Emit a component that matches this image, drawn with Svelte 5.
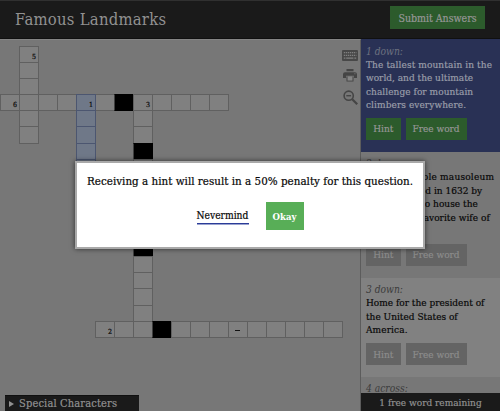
<script>
  const cells = new Map();
  const put = (row, col, extra = {}) => {
    const key = `${row}-${col}`;
    cells.set(key, { row, col, ...(cells.get(key) ?? {}), ...extra });
  };
  for (let row = 1; row <= 6; row++) put(row, 2);
  for (let col = 1; col <= 12; col++) put(4, col);
  for (let row = 4; row <= 18; row++) put(row, 8);
  for (let col = 6; col <= 18; col++) put(18, col);
  for (let row = 4; row <= 10; row++) put(row, 5, { active: true });
  put(1, 2, { label: '5' });
  put(4, 1, { label: '6' });
  put(4, 5, { label: '1' });
  put(4, 8, { label: '3' });
  put(18, 6, { label: '2' });
  put(4, 7, { block: true });
  put(7, 8, { block: true });
  put(13, 8, { block: true });
  put(18, 9, { block: true });
  put(18, 13, { dash: true });
  const board = [...cells.values()];

  // Each line carries its own tracking, in pixels.
  const clues = [
    { id: '1 down:', kind: 'current', lines: [['The tallest mountain in the', 0.1], ['world, and the ultimate', 0], ['challenge for mountain', 0.05], ['climbers everywhere.', 0.08]] },
    { id: '2 down:', kind: 'second', lines: [['This incredible mausoleum', 0.2], ['commissioned in 1632 by', 0.02], ['Shah Jahan to house the', 0.03], ['tomb of his favorite wife of', 0.03], ['the emperor.', 0]] },
    { id: '3 down:', kind: 'third', lines: [['Home for the president of', 0], ['the United States of', 0], ['America.', 0.1]] },
    { id: '4 across:', kind: 'fourth', lines: [] }
  ];
</script>

<div class="app">
  <header>
    <h1>Famous Landmarks</h1>
    <button class="submit">Submit Answers</button>
  </header>
  <div class="content">
    <main>
      <div class="board">
        {#each board as cell}
          <div
            class="cell"
            class:active={cell.active}
            class:block={cell.block}
            style="grid-area: {cell.row} / {cell.col}"
          >
            {#if cell.label}<span class="num">{cell.label}</span>{/if}
            {#if cell.dash}<span class="dash"></span>{/if}
          </div>
        {/each}
      </div>
      <div class="tools">
        <svg width="16" height="11" viewBox="0 0 16 11">
          <rect width="16" height="11" rx="1" fill="#484848" />
          <path stroke="#808080" stroke-width="1.300" stroke-dasharray="1.300 .7" d="M1.800 2.700h12.600M1.800 5.300h12.600" />
          <path stroke="#808080" stroke-width="1.300" d="M1.800 8.100h1.600M4.200 8.100h7.200M12.400 8.100h1.800" />
        </svg>
        <svg width="14" height="13" viewBox="0 0 14 13">
          <path fill="#454545" fill-rule="evenodd" d="M3.500 0h7v2.300h-7zM2 3.300h10q2 0 2 2V9h-3V6.800H3V9H0V5.300q0-2 2-2zM11.400 4.300v1h1v-1zM3.500 7.500h7V12.500h-7z" />
          <path fill="#858585" d="M4.500 7.300h5v4.300h-5z" />
        </svg>
        <svg width="15" height="15" viewBox="0 0 15 15" fill="none" stroke="#454545">
          <circle cx="5.700" cy="5.700" r="4.600" stroke-width="1.600" />
          <path stroke-width="1.400" d="M3.300 5.700h4.800" />
          <path stroke-width="2.200" d="M9.200 9.200l5 5" />
        </svg>
      </div>
      <div class="special"><span class="arrow"></span><span>Special Characters</span></div>
    </main>
    <aside>
      {#each clues as clue}
        <section class={clue.kind}>
          <em>{clue.id}</em>
          {#each clue.lines as [line, tracking]}<p style="letter-spacing: {tracking}px">{line}</p>{/each}
          {#if clue.lines.length}
            <div class="actions">
              <button class="hint">Hint</button>
              <button class="free">Free word</button>
            </div>
          {/if}
        </section>
      {/each}
      <div class="remaining">1 free word remaining</div>
    </aside>
  </div>
  <div class="dialog">
    <p>Receiving a hint will result in a 50% penalty for this question.</p>
    <div class="choices">
      <span class="never">Nevermind</span>
      <button class="okay">Okay</button>
    </div>
  </div>
</div>

<style>
  :global(body) { margin: 0; overflow: hidden; }
  .app {
    position: relative;
    width: 500px;
    height: 411px;
    overflow: hidden;
    display: flex;
    flex-direction: column;
    box-sizing: border-box;
    background: #777;
    color: #080808;
    font-family: 'Roboto Slab', 'DejaVu Serif Condensed', 'DejaVu Serif', serif;
    font-stretch: condensed;
    font-size: 10px;
    -webkit-text-stroke: .2px currentColor;
  }
  h1, p { margin: 0; font-weight: normal; white-space: nowrap; }
  button {
    border: 0;
    padding: 0;
    font: inherit;
    white-space: nowrap;
    background: #2c5b2c;
    color: #969696;
  }
  header {
    height: 39px;
    flex: none;
    box-sizing: border-box;
    background: #1a1a1a;
    border-top: 1px solid #303030;
    border-bottom: 1px solid #101010;
    display: flex;
    justify-content: space-between;
    padding: 5px 15px 0 15px;
  }
  h1 { font-size: 16.500px; line-height: 28px; color: #919191; letter-spacing: .25px; -webkit-text-stroke: 0; }
  .submit { width: 95px; height: 23px; font-size: 10.500px; }
  .content { display: flex; flex: 1; min-height: 0; }
  main {
    width: 361px;
    box-sizing: border-box;
    border-right: 1px solid #5c5c5c;
    border-top: 1px solid #858585;
    position: relative;
    overflow: hidden;
    display: flex;
    justify-content: space-between;
  }
  .board {
    display: grid;
    grid-template-columns: repeat(18, 19px);
    grid-template-rows: repeat(18, 16.200px);
    margin-top: 5.500px;
  }
  .cell {
    box-sizing: border-box;
    width: 20px;
    height: 17.200px;
    border: 1px solid #606060;
    background: #808080;
    display: flex;
    align-items: flex-end;
    justify-content: flex-end;
  }
  .cell.active { background: #6f7888; border-color: #4c5670; z-index: 1; }
  .cell.block { background: #000; border-color: #000; border-left-color: #404040; }
  .num { font-size: 7px; line-height: 8px; padding: 0 2px 1px 0; }
  .dash { width: 5px; height: 1px; margin: 0 7px 6px 0; background: #111; }
  .tools {
    width: 20px;
    margin-top: 10px;
    display: flex;
    flex-direction: column;
    align-items: center;
    gap: 8px;
    padding-right: 2px;
  }
  .tools svg { flex: none; }
  .special {
    position: absolute;
    left: 5px;
    bottom: 0;
    width: 134px;
    height: 16px;
    box-sizing: border-box;
    border-top: 1px solid #101010;
    background: #1a1a1a;
    color: #919191;
    display: flex;
    align-items: center;
    gap: 5px;
    padding-left: 4px;
    font-size: 11px;
    line-height: 13px;
    letter-spacing: .15px;
    white-space: nowrap;
  }
  .arrow {
    border-left: 5px solid #919191;
    border-top: 3px solid transparent;
    border-bottom: 3px solid transparent;
  }
  aside {
    flex: 1;
    position: relative;
    overflow: hidden;
    display: flex;
    flex-direction: column;
  }
  section { flex: none; box-sizing: border-box; padding: 5.500px 0 0 5px; height: 113px; }
  em, section p { display: block; font-size: 10px; line-height: 13.400px; height: 13.400px; }
  em { color: #3c3c3c; font-size: 10.200px; -webkit-text-stroke: 0; }
  .current { background: #293155; }
  .current em { color: #6d7180; }
  .current p { color: #999da9; }
  .second { height: 126px; padding-top: 5px; }
  .third { background: #818181; height: 99px; padding-top: 5px; }
  .fourth { padding-top: 4.500px; }
  .actions { display: flex; gap: 5px; margin-top: 6.500px; }
  .actions button { height: 22px; }
  .hint { width: 34.500px; }
  .free { width: 61px; }
  .second button, .third button { background: #646464; color: #8c8c8c; }
  .remaining {
    position: absolute;
    left: 0;
    right: 0;
    bottom: 0;
    height: 18px;
    line-height: 20px;
    text-align: center;
    background: #1a1a1a;
    color: #919191;
  }
  .dialog {
    position: absolute;
    left: 75px;
    top: 161px;
    width: 350px;
    height: 88px;
    box-sizing: border-box;
    border: 2px solid #a9a9a9;
    background: #fff;
    box-shadow: 0 0 5px rgba(0, 0, 0, .6);
    text-align: center;
    z-index: 2;
  }
  .dialog p { font-size: 11.500px; line-height: 15px; margin-top: 11px; letter-spacing: .02px; }
  .choices {
    display: flex;
    justify-content: center;
    align-items: center;
    gap: 17px;
    margin-top: 13px;
  }
  .never { border-bottom: 1px solid #2b3c98; box-shadow: 0 1px #9aa3cf; line-height: 14px; width: 52px; font-size: 10.200px; white-space: nowrap; }
  .okay { width: 38px; height: 28px; background: #58ae57; color: #fff; font-weight: bold; font-size: 9.500px; -webkit-text-stroke: 0; }
</style>
